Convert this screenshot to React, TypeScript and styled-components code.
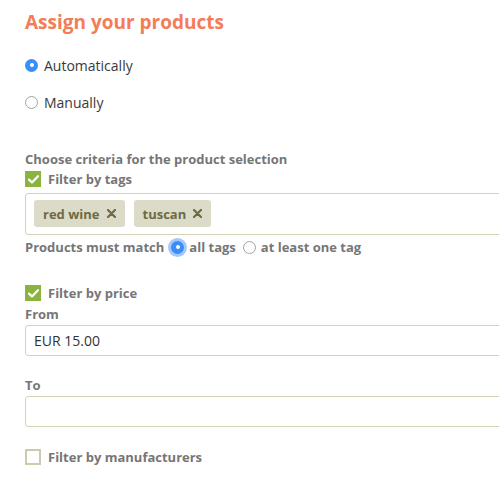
import React from "react";
import styled, { createGlobalStyle, css } from "styled-components";

const Global = createGlobalStyle`
  html, body { margin: 0; padding: 0; background: #fff; overflow: hidden; }
  body { font-family: "Open Sans", "Noto Sans", sans-serif; -webkit-font-smoothing: antialiased; }
`;

const Page = styled.div`
  width: 560px;
  padding: 10px 0 0 25px;
  box-sizing: border-box;
`;

const Title = styled.h2`
  margin: 0;
  font-size: 19px;
  line-height: 24px;
  font-weight: 700;
  color: #f47c57;
`;

const RadioRow = styled.label<{ $top: number }>`
  display: flex;
  align-items: center;
  gap: 6px;
  margin-top: ${(p) => p.$top}px;
  height: 20px;
  font-size: 14px;
  color: #3a3a3a;
`;

const RadioDot = styled.span<{ $on?: boolean; $focus?: boolean }>`
  width: 13px;
  height: 13px;
  border-radius: 50%;
  box-sizing: border-box;
  flex: none;
  display: inline-flex;
  align-items: center;
  justify-content: center;
  border: 1px solid #a3a3a3;
  background: #fff;
  ${(p) =>
    p.$on &&
    css`
      border: none;
      background: #3a8ef6;
      &::after {
        content: "";
        width: 4px;
        height: 4px;
        border-radius: 50%;
        background: #fff;
      }
    `}
  ${(p) =>
    p.$focus &&
    css`
      box-shadow: 0 0 0 3px rgba(90, 155, 245, 0.55);
    `}
`;

const SectionLabel = styled.div<{ $top: number }>`
  margin-top: ${(p) => p.$top}px;
  font-size: 13px;
  line-height: 16px;
  font-weight: 700;
  color: #767676;
`;

const CheckRow = styled.label<{ $top: number }>`
  display: flex;
  align-items: center;
  gap: 7px;
  height: 18px;
  margin-top: ${(p) => p.$top}px;
  font-size: 13px;
  font-weight: 700;
  color: #767676;
`;

const Box = styled.span<{ $on?: boolean }>`
  width: 16px;
  height: 16px;
  box-sizing: border-box;
  flex: none;
  display: inline-flex;
  align-items: center;
  justify-content: center;
  background: ${(p) => (p.$on ? "#8bb43e" : "#fff")};
  border: ${(p) => (p.$on ? "none" : "2px solid #cdc9ad")};
`;

const TagBox = styled.div`
  margin-top: 5px;
  height: 42px;
  box-sizing: border-box;
  border: 1px solid #d5d2b8;
  border-radius: 3px;
  padding: 6px 8px;
  display: flex;
  gap: 9px;
  align-items: flex-start;
`;

const Chip = styled.span`
  height: 27px;
  display: inline-flex;
  align-items: center;
  gap: 7px;
  padding: 0 9px 0 9px;
  border-radius: 3px;
  background: #dcdbc7;
  color: #6c6b46;
  font-size: 13px;
  font-weight: 700;
`;

const MatchRow = styled.div`
  display: flex;
  align-items: center;
  height: 20px;
  margin-top: 2px;
  font-size: 13px;
  font-weight: 700;
  color: #767676;
`;

const MatchOption = styled.span<{ $gap: number }>`
  display: inline-flex;
  align-items: center;
  gap: 5px;
  margin-left: ${(p) => p.$gap}px;
`;

const FieldLabel = styled.div<{ $top: number }>`
  margin-top: ${(p) => p.$top}px;
  font-size: 13px;
  line-height: 16px;
  font-weight: 700;
  color: #767676;
`;

const Input = styled.div`
  margin-top: 3px;
  height: 31px;
  box-sizing: border-box;
  border: 1px solid #d5d2b8;
  border-radius: 3px;
  padding: 0 8px;
  display: flex;
  align-items: center;
  font-size: 14px;
  color: #333;
`;

const Check = () => (
  <svg width="11" height="9" viewBox="0 0 11 9" fill="none">
    <path d="M1 4.6 L4 7.4 L10 1.2" stroke="#fff" strokeWidth="2.2" strokeLinecap="round" strokeLinejoin="round" />
  </svg>
);

const Cross = () => (
  <svg width="9" height="9" viewBox="0 0 9 9">
    <path d="M1 1 L8 8 M8 1 L1 8" stroke="#6c6b46" strokeWidth="2.2" strokeLinecap="round" />
  </svg>
);

export default function App() {
  return (
    <Page>
      <Global />
      <Title>Assign your products</Title>
      <RadioRow $top={21}>
        <RadioDot $on />
        Automatically
      </RadioRow>
      <RadioRow $top={17}>
        <RadioDot />
        Manually
      </RadioRow>
      <SectionLabel $top={39}>Choose criteria for the product selection</SectionLabel>
      <CheckRow $top={3}>
        <Box $on>
          <Check />
        </Box>
        Filter by tags
      </CheckRow>
      <TagBox>
        <Chip>
          red wine
          <Cross />
        </Chip>
        <Chip>
          tuscan
          <Cross />
        </Chip>
      </TagBox>
      <MatchRow>
        Products must match
        <MatchOption $gap={7}>
          <RadioDot $on $focus />
          all tags
        </MatchOption>
        <MatchOption $gap={7}>
          <RadioDot />
          at least one tag
        </MatchOption>
      </MatchRow>
      <CheckRow $top={27}>
        <Box $on>
          <Check />
        </Box>
        Filter by price
      </CheckRow>
      <FieldLabel $top={4}>From</FieldLabel>
      <Input>EUR 15.00</Input>
      <FieldLabel $top={21}>To</FieldLabel>
      <Input />
      <CheckRow $top={21}>
        <Box />
        Filter by manufacturers
      </CheckRow>
    </Page>
  );
}
